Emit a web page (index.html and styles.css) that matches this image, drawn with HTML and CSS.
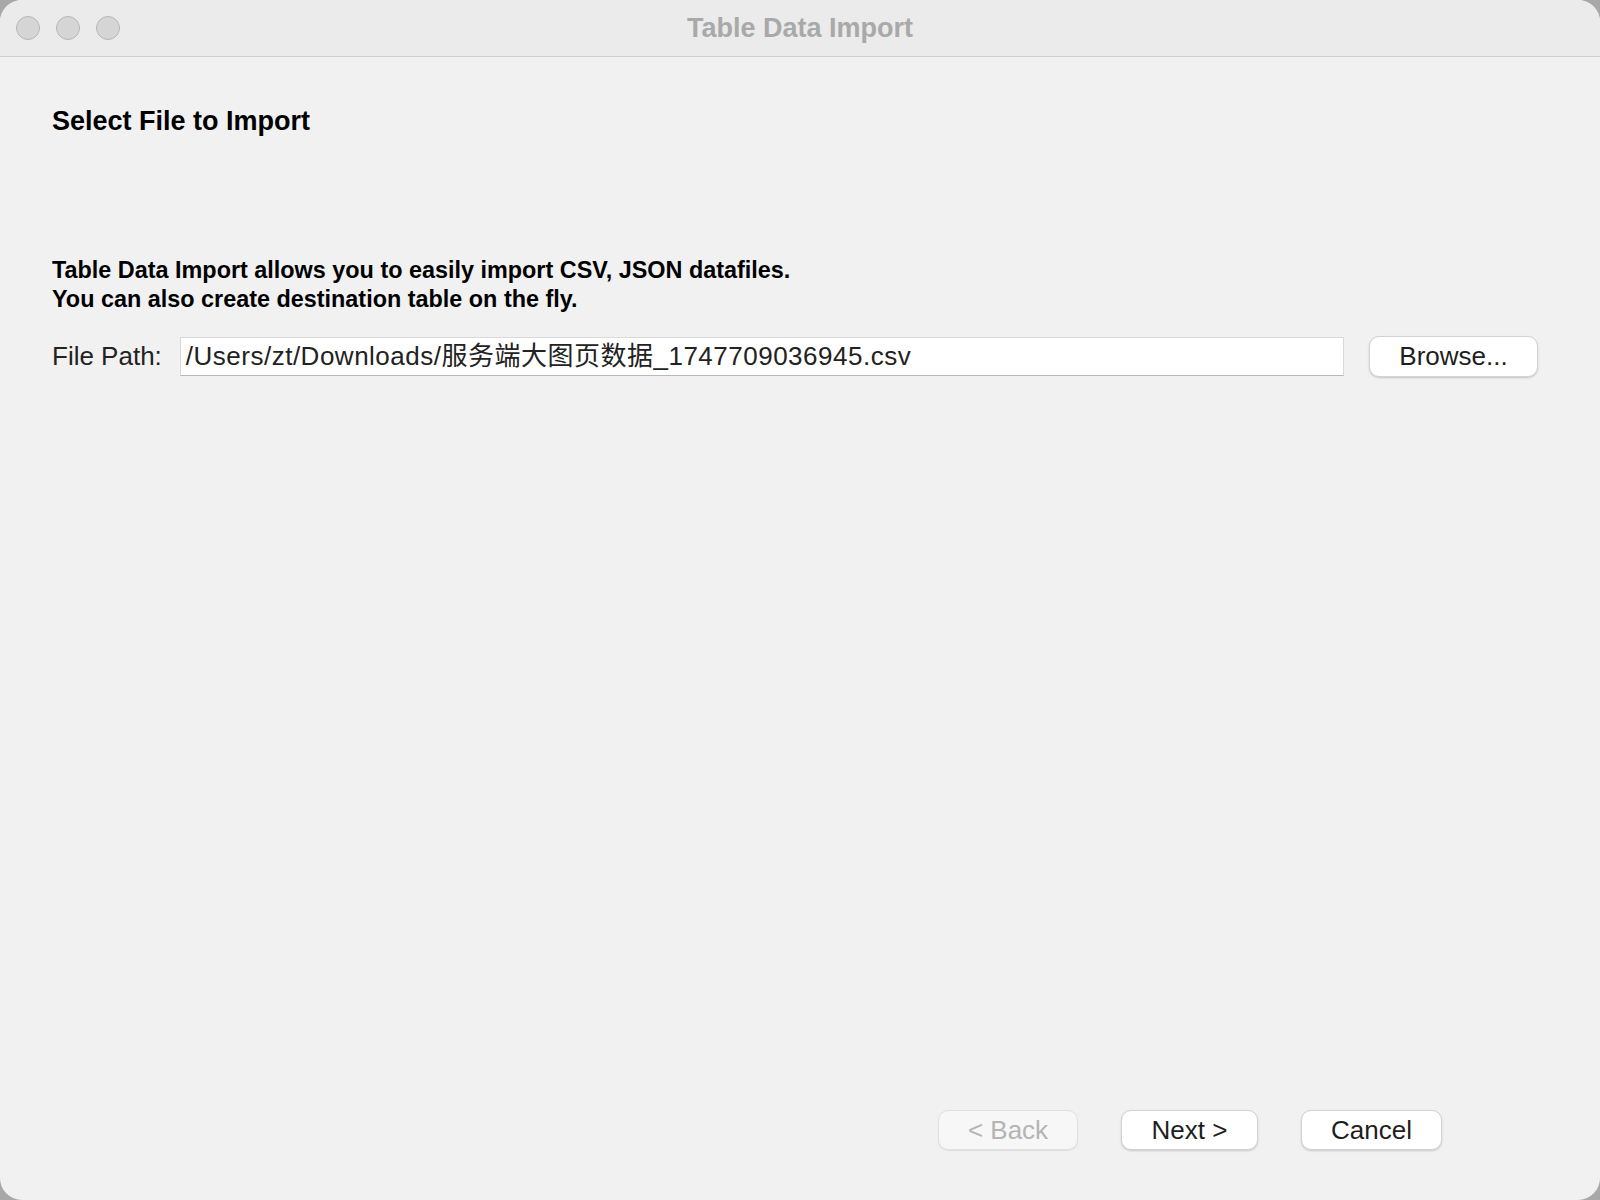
FILE: index.html
```html
<!DOCTYPE html>
<html lang="en">
<head>
<meta charset="utf-8">
<title>Table Data Import</title>
<link rel="stylesheet" href="styles.css">
</head>
<body>
<div class="window">
  <header class="titlebar">
    <div class="lights">
      <span class="light"></span>
      <span class="light"></span>
      <span class="light"></span>
    </div>
    <div class="title">Table Data Import</div>
  </header>
  <main class="content">
    <h1 class="heading">Select File to Import</h1>
    <p class="desc">Table Data Import allows you to easily import CSV, JSON datafiles.<br>You can also create destination table on the fly.</p>
    <div class="path-row">
      <label class="path-label">File Path:</label>
      <div class="text-field">/Users/zt/Downloads/服务端大图页数据_1747709036945.csv</div>
      <button class="btn btn-browse">Browse...</button>
    </div>
  </main>
  <footer class="footer">
    <button class="btn btn-foot btn-disabled">&lt; Back</button>
    <button class="btn btn-foot btn-next">Next &gt;</button>
    <button class="btn btn-foot btn-cancel">Cancel</button>
  </footer>
</div>
</body>
</html>
```

FILE: styles.css
```css
html, body {
  margin: 0;
  padding: 0;
  width: 1600px;
  height: 1200px;
  background: #a8a8a8;
  overflow: hidden;
}

.window {
  width: 1600px;
  height: 1200px;
  box-sizing: border-box;
  background: #f1f1f1;
  border-radius: 22px;
  overflow: hidden;
  display: flex;
  flex-direction: column;
  font-family: "Liberation Sans", "Noto Sans CJK SC", sans-serif;
  color: #1e1e1e;
}

.titlebar {
  position: relative;
  height: 57px;
  flex: 0 0 57px;
  box-sizing: border-box;
  background: #ebebeb;
  border-bottom: 1px solid #cfcfcf;
  display: flex;
  align-items: center;
}

.lights {
  display: flex;
  gap: 16px;
  padding-left: 16px;
}

.light {
  width: 22px;
  height: 22px;
  border-radius: 50%;
  background: #d5d5d5;
  border: 1px solid #b6b6b6;
}

.title {
  position: absolute;
  left: 0;
  right: 0;
  top: 0;
  line-height: 56px;
  text-align: center;
  font-size: 27px;
  font-weight: bold;
  color: #a9a9a9;
}

.content {
  flex: 1;
  padding: 48px 62px 0 52px;
}

.heading {
  margin: 0;
  font-size: 27px;
  line-height: 32px;
  font-weight: bold;
  color: #000;
}

.desc {
  margin: 119px 0 0 0;
  font-size: 23.4px;
  line-height: 28.5px;
  font-weight: bold;
  color: #000;
}

.path-row {
  margin-top: 23px;
  display: flex;
  align-items: center;
}

.path-label {
  font-size: 26px;
  color: #222;
  margin-right: 18px;
}

.text-field {
  flex: 1;
  height: 39px;
  box-sizing: border-box;
  background: #fff;
  border: 1px solid #d9d9d9;
  border-bottom-color: #b9b9b9;
  font-size: 26px;
  letter-spacing: 0.5px;
  line-height: 37px;
  padding-left: 5px;
  color: #222;
  white-space: nowrap;
  overflow: hidden;
}

.btn {
  font-family: "Liberation Sans", "Noto Sans CJK SC", sans-serif;
  font-size: 26px;
  color: #1e1e1e;
  background: #fff;
  border: 1px solid #d3d3d3;
  border-radius: 10px;
  box-shadow: 0 1px 2px rgba(0, 0, 0, 0.18);
  height: 41px;
  padding: 0;
  box-sizing: border-box;
}

.btn-browse {
  margin-left: 25px;
  width: 169px;
}

.footer {
  display: flex;
  justify-content: flex-end;
  gap: 43px;
  padding: 0 158px 50px 0;
}

.btn-foot {
  height: 40px;
}

.btn-disabled {
  width: 140px;
  background: #f7f7f7;
  color: #b4b4b4;
  border-color: #e0e0e0;
  box-shadow: 0 1px 1px rgba(0, 0, 0, 0.08);
}

.btn-next {
  width: 137px;
}

.btn-cancel {
  width: 141px;
}
```
